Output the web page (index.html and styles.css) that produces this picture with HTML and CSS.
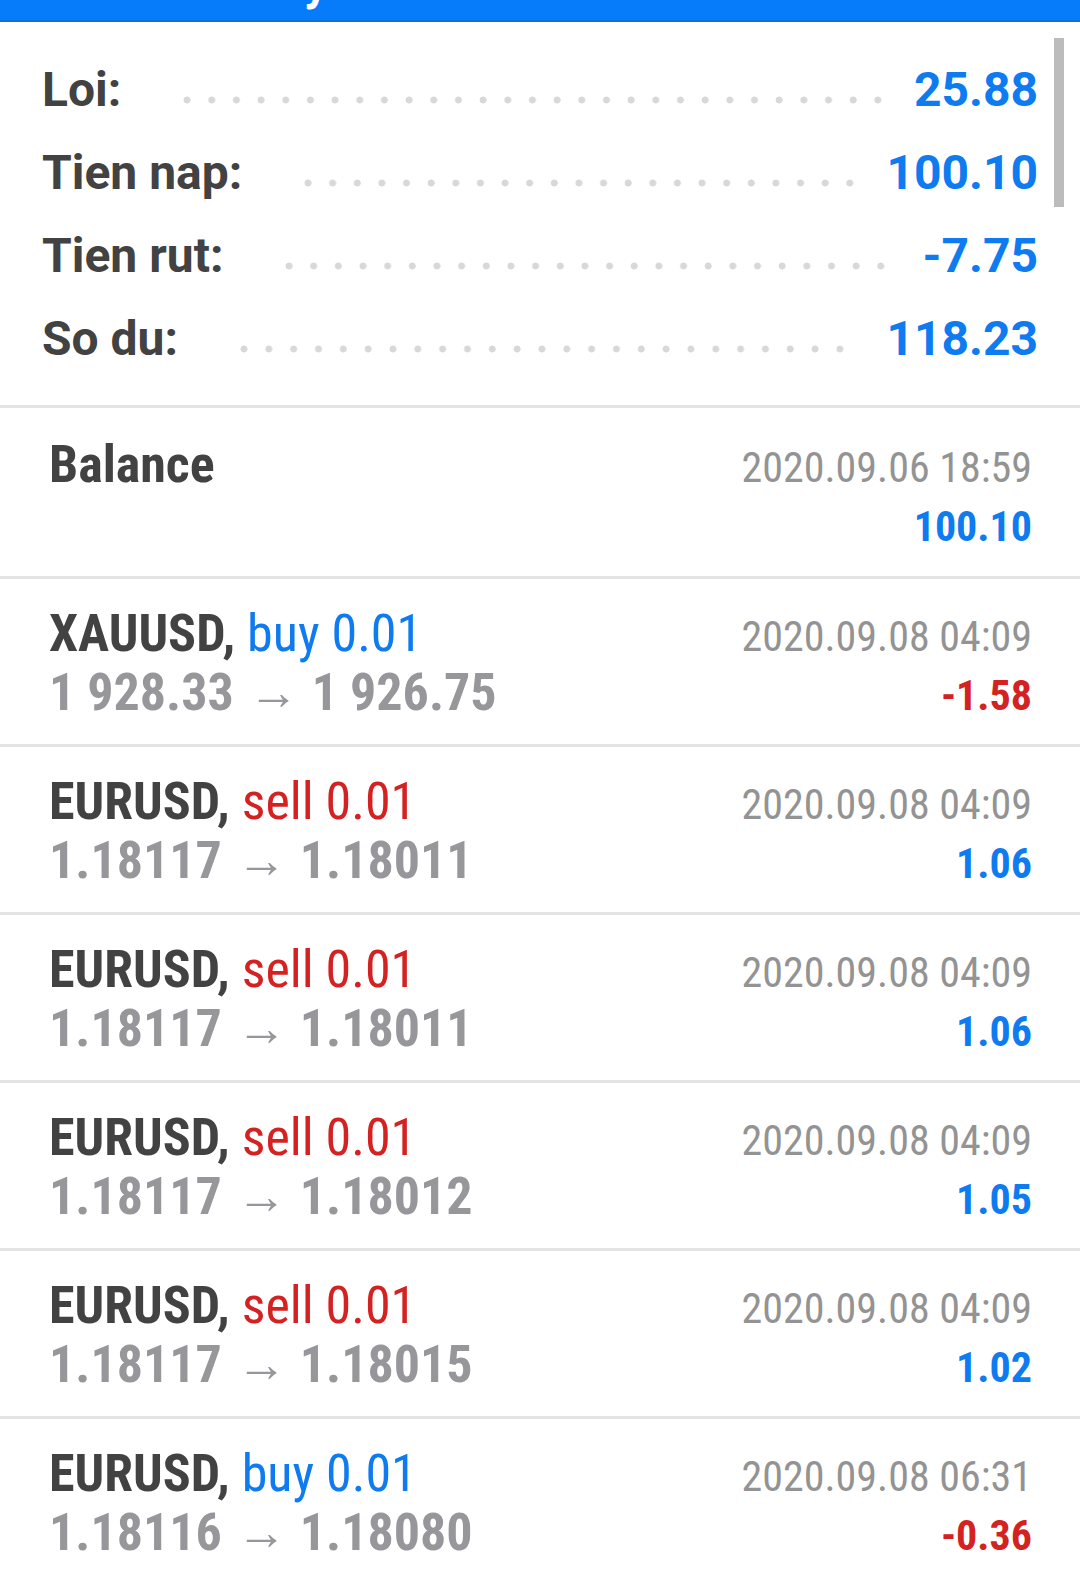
FILE: index.html
```html
<!DOCTYPE html>
<html>
<head>
<meta charset="utf-8">
<link rel="stylesheet" href="styles.css">
</head>
<body>
<div class="screen">
  <div class="topbar"><span class="title">History</span></div>
  <div class="summary">
    <div class="srow"><span class="slabel">Loi:</span><span class="leader lead-loi"></span><span class="svalue">25.88</span></div>
    <div class="srow"><span class="slabel">Tien nap:</span><span class="leader lead-nap"></span><span class="svalue">100.10</span></div>
    <div class="srow"><span class="slabel">Tien rut:</span><span class="leader lead-rut"></span><span class="svalue">-7.75</span></div>
    <div class="srow"><span class="slabel">So du:</span><span class="leader lead-du"></span><span class="svalue">118.23</span></div>
    <div class="scrollbar"></div>
  </div>
  <div class="list">
    <div class="item item-balance">
      <div class="line1"><span class="cond left"><span class="sym">Balance</span></span><span class="cond right date">2020.09.06 18:59</span></div>
      <div class="line2"><span class="cond right profit pos">100.10</span></div>
    </div>
    <div class="item">
      <div class="line1"><span class="cond left"><span class="sym">XAUUSD,</span> <span class="buy">buy 0.01</span></span><span class="cond right date">2020.09.08 04:09</span></div>
      <div class="line2"><span class="cond left price">1 928.33<span class="arrow">→</span>1 926.75</span><span class="cond right profit neg">-1.58</span></div>
    </div>
    <div class="item">
      <div class="line1"><span class="cond left"><span class="sym">EURUSD,</span> <span class="sell">sell 0.01</span></span><span class="cond right date">2020.09.08 04:09</span></div>
      <div class="line2"><span class="cond left price">1.18117<span class="arrow">→</span>1.18011</span><span class="cond right profit pos">1.06</span></div>
    </div>
    <div class="item">
      <div class="line1"><span class="cond left"><span class="sym">EURUSD,</span> <span class="sell">sell 0.01</span></span><span class="cond right date">2020.09.08 04:09</span></div>
      <div class="line2"><span class="cond left price">1.18117<span class="arrow">→</span>1.18011</span><span class="cond right profit pos">1.06</span></div>
    </div>
    <div class="item">
      <div class="line1"><span class="cond left"><span class="sym">EURUSD,</span> <span class="sell">sell 0.01</span></span><span class="cond right date">2020.09.08 04:09</span></div>
      <div class="line2"><span class="cond left price">1.18117<span class="arrow">→</span>1.18012</span><span class="cond right profit pos">1.05</span></div>
    </div>
    <div class="item">
      <div class="line1"><span class="cond left"><span class="sym">EURUSD,</span> <span class="sell">sell 0.01</span></span><span class="cond right date">2020.09.08 04:09</span></div>
      <div class="line2"><span class="cond left price">1.18117<span class="arrow">→</span>1.18015</span><span class="cond right profit pos">1.02</span></div>
    </div>
    <div class="item">
      <div class="line1"><span class="cond left"><span class="sym">EURUSD,</span> <span class="buy">buy 0.01</span></span><span class="cond right date">2020.09.08 06:31</span></div>
      <div class="line2"><span class="cond left price">1.18116<span class="arrow">→</span>1.18080</span><span class="cond right profit neg">-0.36</span></div>
    </div>
  </div>
</div>
</body>
</html>
```
FILE: styles.css
```css
html, body {
  margin: 0;
  padding: 0;
  background: #ffffff;
}
.screen {
  width: 1080px;
  height: 1570px;
  overflow: hidden;
  font-family: Roboto, "Liberation Sans", sans-serif;
  position: relative;
}
.topbar {
  height: 22px;
  background: #077cfb;
  border-bottom: 2px solid #0a6fe0;
  box-sizing: border-box;
  overflow: hidden;
}
.title {
  display: block;
  margin-top: -45px;
  margin-left: 172px;
  line-height: 56px;
  font-size: 48px;
  font-weight: 700;
  color: #ffffff;
}
.summary {
  position: relative;
  height: 383px;
  box-sizing: border-box;
  padding: 26px 42px 0 42px;
}
.srow {
  display: flex;
  align-items: flex-start;
  height: 83px;
  line-height: 83px;
  font-size: 48px;
  font-weight: 700;
}
.slabel {
  color: #424242;
}
.svalue {
  color: #0e7bf0;
}
.leader {
  flex: 1;
  height: 8px;
  margin-top: 48px;
  background-image: radial-gradient(circle, #d8d8d8 3.2px, rgba(216,216,216,0) 3.8px);
  background-size: 24px 8px;
  background-repeat: space no-repeat;
}
.lead-loi { margin-left: 54px; margin-right: 24px; }
.lead-nap { margin-left: 54px; margin-right: 24px; }
.lead-rut { margin-left: 54px; margin-right: 30px; }
.lead-du { margin-left: 54px; margin-right: 34px; }
.scrollbar {
  position: absolute;
  right: 16px;
  top: 16px;
  width: 10px;
  height: 169px;
  background: #bcbcbc;
}
.list {
  border-top: 3px solid #e4e4e4;
}
.item {
  height: 168px;
  border-bottom: 3px solid #e4e4e4;
  padding: 26px 48px 0 49px;
  box-sizing: border-box;
}
.item-balance {
  height: 171px;
  padding-top: 28px;
}
.item-balance .line2 {
  padding-top: 4px;
}
.line1, .line2 {
  display: flex;
  justify-content: space-between;
  align-items: baseline;
  height: 58px;
  line-height: 58px;
}
.line1 { font-size: 52px; }
.line2 { font-size: 52px; }
.cond {
  font-family: "Roboto Condensed", Roboto, sans-serif;
  font-stretch: 75%;
  white-space: nowrap;
}
.right {
  margin-left: auto;
}
.sym {
  font-size: 52px;
  font-weight: 700;
  color: #424242;
}
.buy {
  font-size: 52px;
  font-weight: 400;
  color: #0e7bf0;
}
.sell {
  font-size: 52px;
  font-weight: 400;
  color: #d42222;
}
.price {
  font-size: 52px;
  font-weight: 700;
  color: #97979b;
}
.arrow {
  display: inline-block;
  margin: 0 13px 0 15px;
  font-size: 50px;
  font-weight: 300;
  vertical-align: 1px;
}
.date {
  font-size: 42px;
  font-weight: 400;
  color: #939393;
}
.profit {
  font-size: 42px;
  font-weight: 700;
}
.pos { color: #0e7bf0; }
.neg { color: #d42222; }
```
